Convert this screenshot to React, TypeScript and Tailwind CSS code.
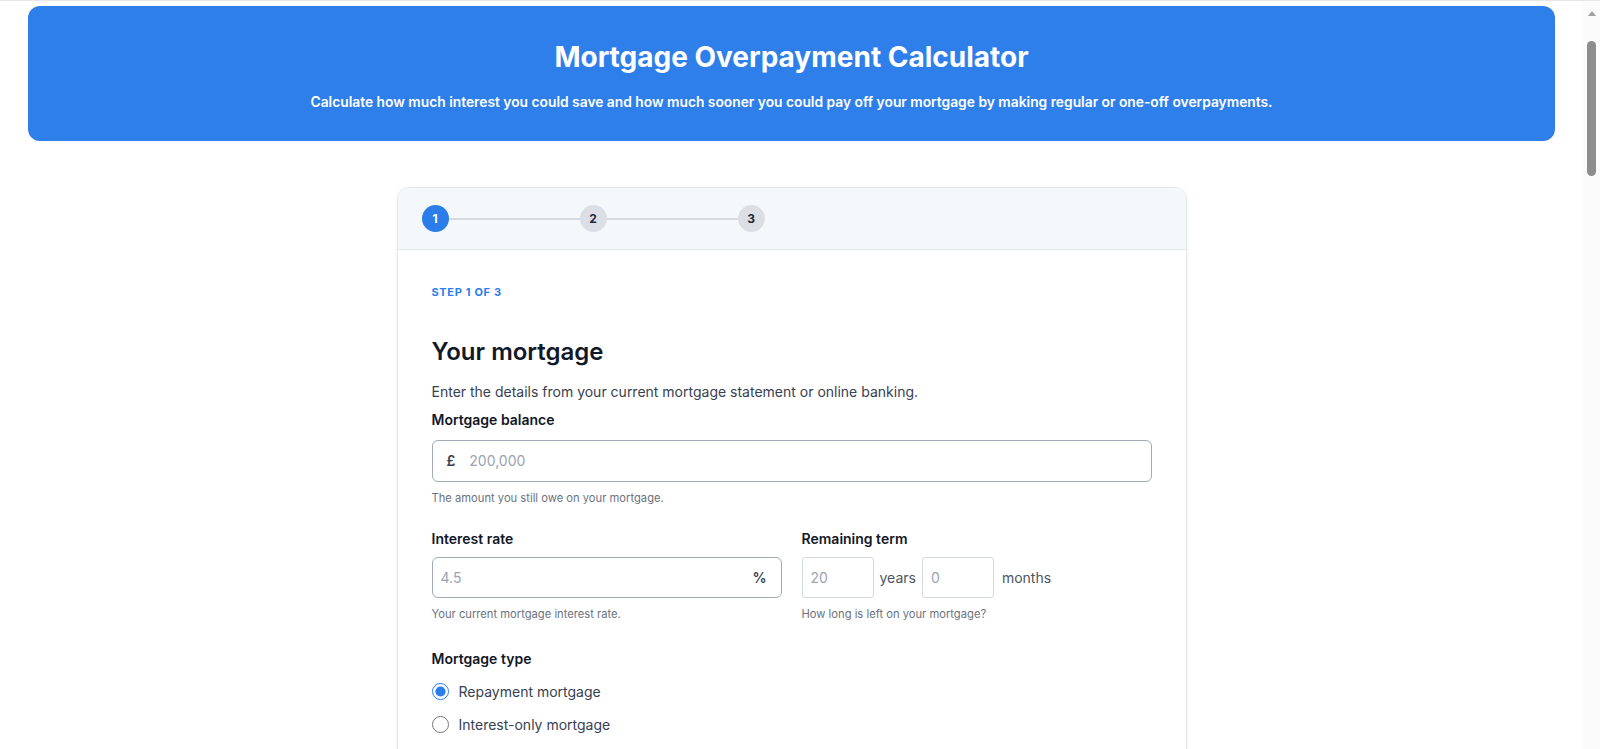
import React from 'react';

const STEPS = [1, 2, 3];

function Stepper({ current }: { current: number }) {
  return (
    <div className="flex items-center border-b border-[#e5e7eb] bg-[#f5f8fb] px-6 py-[17px]">
      {STEPS.map((step, i) => (
        <React.Fragment key={step}>
          <div
            className={`flex h-[27px] w-[27px] shrink-0 items-center justify-center rounded-full text-[12px] font-bold ${
              step === current ? 'bg-[#2b7de9] text-white' : 'bg-[#dbdfe5] text-[#1f2937]'
            }`}
          >
            {step}
          </div>
          {i < STEPS.length - 1 && <div className="h-[2px] w-[131px] bg-[#d7dbe1]" />}
        </React.Fragment>
      ))}
    </div>
  );
}

// mimics the window scrollbar seen in the screenshot
function ScrollGutter() {
  return (
    <div className="flex w-[17px] shrink-0 flex-col items-center bg-[#fbfbfb] pt-[10px]">
      <div className="h-0 w-0 border-x-[4px] border-b-[5px] border-x-transparent border-b-[#a0a0a0]" />
      <div className="mt-[25px] h-[135px] w-[9px] rounded-full bg-[#8d8d8d]" />
    </div>
  );
}

export default function App() {
  const [type, setType] = React.useState('repayment');

  return (
    <div
      className="flex h-screen overflow-hidden border-t border-[#e6e6e6] bg-white text-[#111827]"
      style={{ fontFamily: 'Inter, "Noto Sans", sans-serif' }}
    >
      <main className="min-w-0 flex-1 pb-10">
        <div className="px-7 pt-[5px]">
          <header className="flex h-[135px] flex-col items-center rounded-[12px] bg-[#2f7fea] pt-[34px] text-white">
            <h1 className="text-[28px] font-bold leading-[34px]">Mortgage Overpayment Calculator</h1>
            <p className="mt-[18px] text-[13.8px] font-semibold">
              Calculate how much interest you could save and how much sooner you could pay off your mortgage by making regular or one-off overpayments.
            </p>
          </header>
        </div>

        <div className="mx-auto mt-[46px] w-[790px] overflow-hidden rounded-[12px] border border-[#e5e7eb] shadow-[0_1px_4px_rgba(0,0,0,0.05)]">
          <Stepper current={1} />

          <div className="px-[34px] pb-[140px] pt-[34px]">
            <div className="text-[11px] font-bold tracking-[0.06em] text-[#2b7de9]">STEP 1 OF 3</div>

            <h2 className="mt-[36px] text-[24px] font-semibold leading-[30px]">Your mortgage</h2>
            <p className="mt-[14px] text-[14px] text-[#374151]">
              Enter the details from your current mortgage statement or online banking.
            </p>

            <label className="mt-[7px] block text-[14px] font-semibold">Mortgage balance</label>
            <div className="mt-[10px] flex h-[42px] items-center rounded-[6px] border border-[#a3a9b6] px-[14px]">
              <span className="text-[14px] font-semibold text-[#374151]">£</span>
              <input
                className="ml-[14px] w-full bg-transparent text-[14px] outline-none placeholder:text-[#9aa3b2]"
                placeholder="200,000"
              />
            </div>
            <p className="mt-[8px] text-[11.2px] text-[#6b7280]">The amount you still owe on your mortgage.</p>

            <div className="mt-[22px] grid grid-cols-2 gap-5">
              <div>
                <label className="block text-[14px] font-semibold">Interest rate</label>
                <div className="mt-[8px] flex h-[41px] items-center rounded-[6px] border border-[#a3a9b6] pl-[8px] pr-[14px]">
                  <input
                    className="w-full bg-transparent text-[14px] outline-none placeholder:text-[#9aa3b2]"
                    placeholder="4.5"
                  />
                  <span className="text-[14px] font-semibold text-[#374151]">%</span>
                </div>
                <p className="mt-[8px] text-[11.2px] text-[#6b7280]">Your current mortgage interest rate.</p>
              </div>
              <div>
                <label className="block text-[14px] font-semibold">Remaining term</label>
                <div className="mt-[8px] flex items-center gap-[6px]">
                  <input
                    className="h-[41px] w-[72px] rounded-[3px] border border-[#d4d8df] px-[8px] text-[14px] outline-none placeholder:text-[#9aa3b2]"
                    placeholder="20"
                  />
                  <span className="text-[14px] text-[#4b5563]">years</span>
                  <input
                    className="h-[41px] w-[72px] rounded-[3px] border border-[#d4d8df] px-[8px] text-[14px] outline-none placeholder:text-[#9aa3b2]"
                    placeholder="0"
                  />
                  <span className="ml-[2px] text-[14px] text-[#4b5563]">months</span>
                </div>
                <p className="mt-[8px] text-[11.2px] text-[#6b7280]">How long is left on your mortgage?</p>
              </div>
            </div>

            <label className="mt-[25px] block text-[14px] font-semibold">Mortgage type</label>
            <div className="mt-[12px] flex flex-col gap-[12px]">
              {[
                { id: 'repayment', label: 'Repayment mortgage' },
                { id: 'interest', label: 'Interest-only mortgage' },
              ].map((opt) => (
                <label key={opt.id} className="flex cursor-pointer items-center gap-[10px] text-[14px] text-[#374151]">
                  <input
                    type="radio"
                    name="type"
                    checked={type === opt.id}
                    onChange={() => setType(opt.id)}
                    className="h-[17px] w-[17px] accent-[#2b7de9]"
                  />
                  {opt.label}
                </label>
              ))}
            </div>
          </div>
        </div>
      </main>
      <ScrollGutter />
    </div>
  );
}
